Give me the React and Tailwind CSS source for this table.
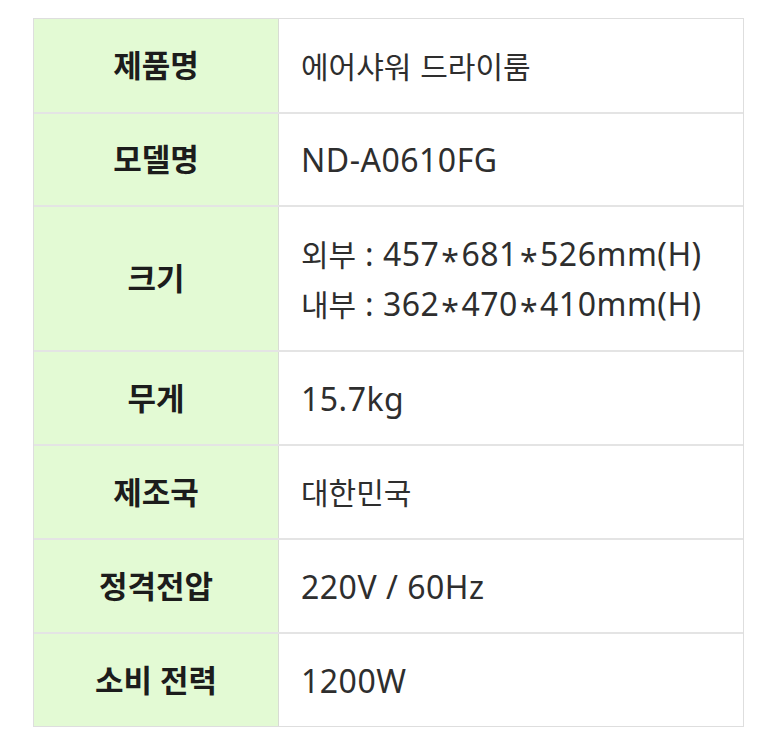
import React from 'react';

const rows = [
  { label: '제품명', value: ['에어샤워 드라이룸'], h: 'h-[93px]' },
  { label: '모델명', value: ['ND-A0610FG'], h: 'h-[93px]' },
  { label: '크기', value: ['외부 : 457*681*526mm(H)', '내부 : 362*470*410mm(H)'], h: 'h-[145px]' },
  { label: '무게', value: ['15.7kg'], h: 'h-[94px]' },
  { label: '제조국', value: ['대한민국'], h: 'h-[94px]' },
  { label: '정격전압', value: ['220V / 60Hz'], h: 'h-[94px]' },
  { label: '소비 전력', value: ['1200W'], h: 'h-[94px]' },
];

// hangul runs render a bit smaller than latin/digits in the original,
// and the asterisk sits centred on the digits
const Mixed = ({ text }) =>
  text.split(/([\uAC00-\uD7A3]+|\*)/).map((part, i) => {
    if (part === '*') return <span key={i} className="inline-block translate-y-[7px] px-[2px]">*</span>;
    if (/[\uAC00-\uD7A3]/.test(part)) return <span key={i} className="text-[30px] tracking-normal">{part}</span>;
    return <span key={i}>{part}</span>;
  });

export default function App() {
  return (
    <div
      className="w-[777px] h-[750px] bg-white pt-[18px] pl-[33px]"
      style={{ fontFamily: '"Noto Sans", "Noto Sans CJK KR", sans-serif' }}
    >
      <div className="w-[711px] border border-[#dedede]">
        {rows.map((r, i) => (
          <div key={r.label} className={`flex ${r.h} ${i > 0 ? 'border-t-2 border-[#e4e4e4]' : ''}`}>
            <div className="w-[245px] shrink-0 bg-[#e3fad4] border-r border-[#d8dcd4] flex items-center justify-center text-[31px] font-semibold text-[#1c1c1c]">
              {r.label}
            </div>
            <div className="flex-1 flex flex-col justify-center pl-[22px] text-[32px] tracking-[0.5px] text-[#2e2e2e] leading-[49px]">
              {r.value.map((v) => (
                <div key={v}><Mixed text={v} /></div>
              ))}
            </div>
          </div>
        ))}
      </div>
    </div>
  );
}
